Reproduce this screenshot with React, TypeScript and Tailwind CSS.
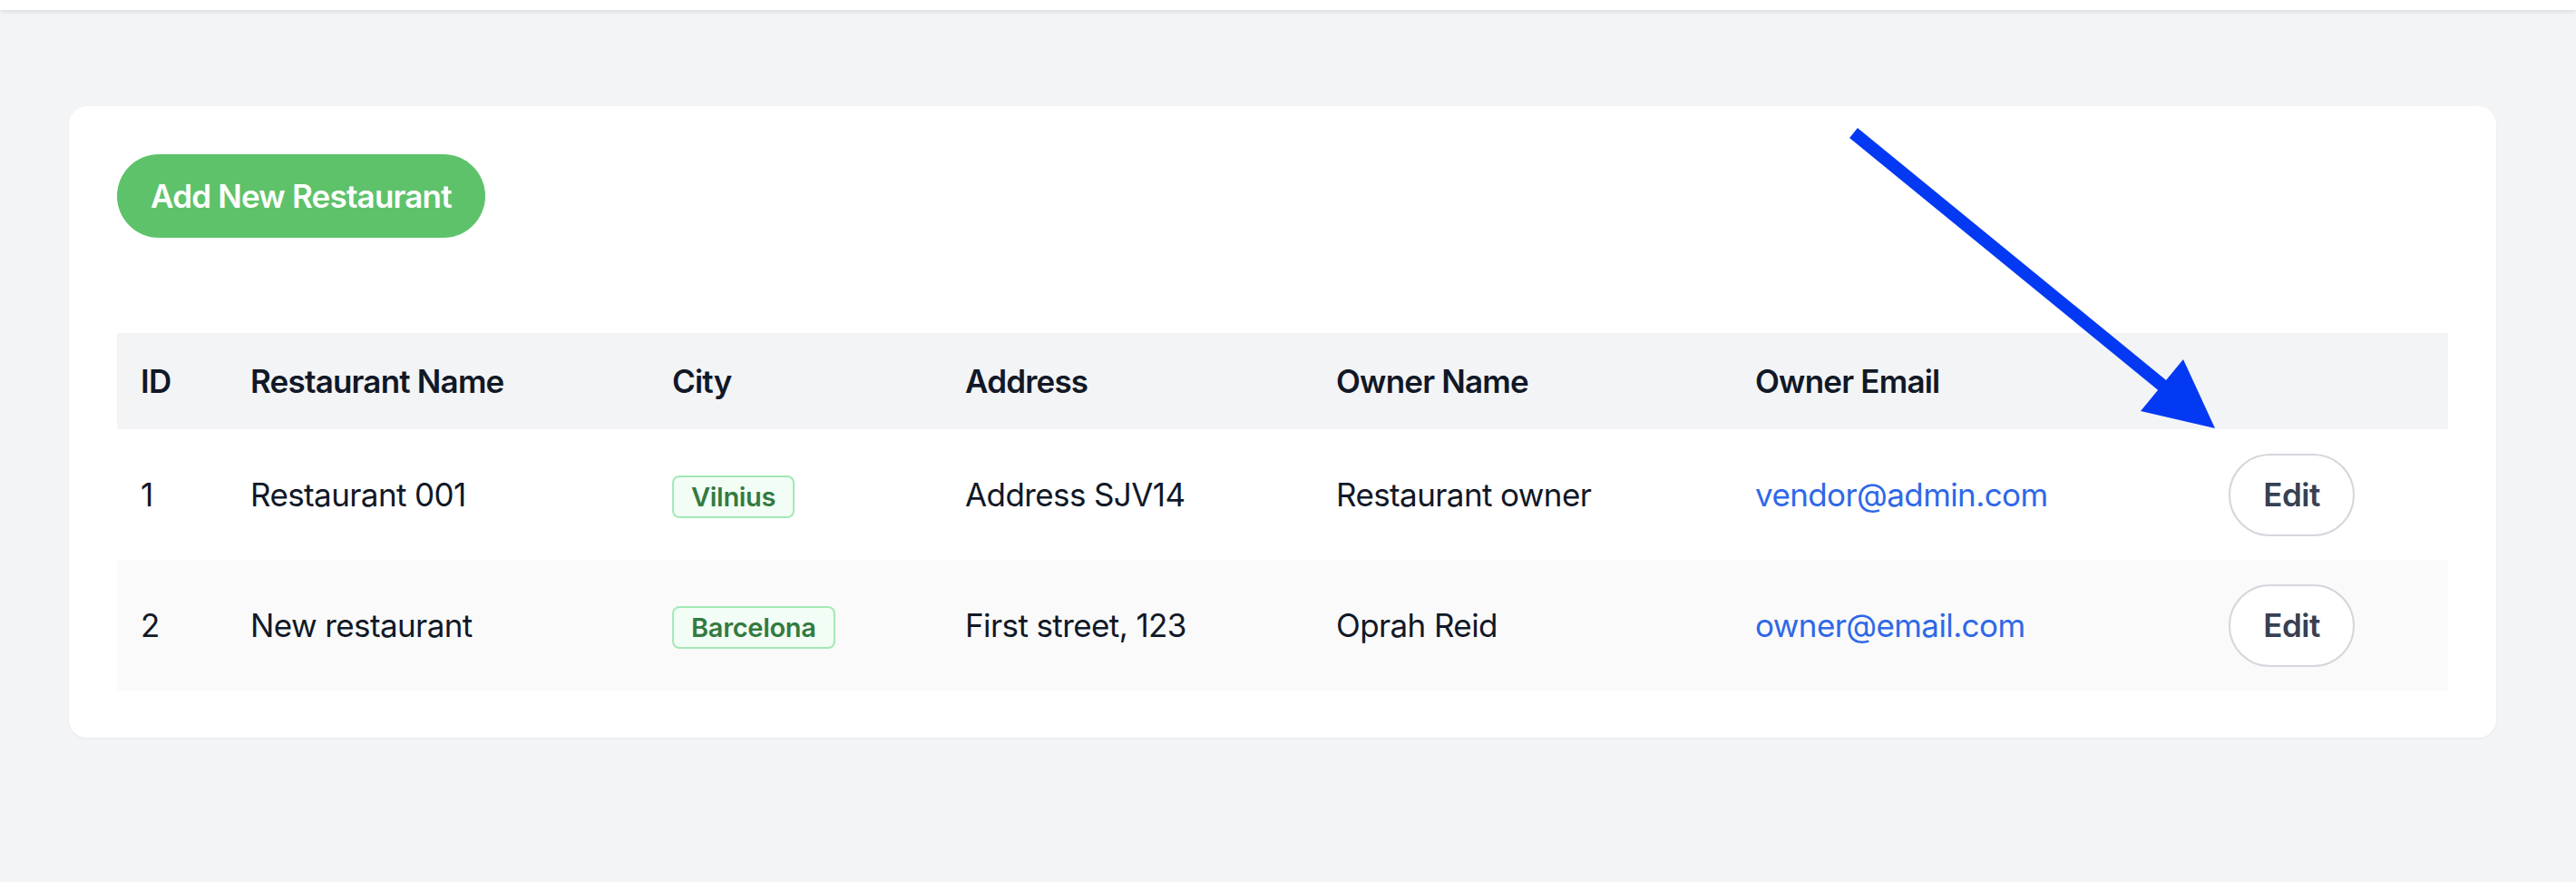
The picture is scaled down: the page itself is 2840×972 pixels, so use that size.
import React from 'react';

interface Restaurant {
  id: number;
  name: string;
  city: string;
  address: string;
  owner: string;
  email: string;
}

const restaurants: Restaurant[] = [
  { id: 1, name: 'Restaurant 001', city: 'Vilnius', address: 'Address SJV14', owner: 'Restaurant owner', email: 'vendor@admin.com' },
  { id: 2, name: 'New restaurant', city: 'Barcelona', address: 'First street, 123', owner: 'Oprah Reid', email: 'owner@email.com' },
];

const headers = ['ID', 'Restaurant Name', 'City', 'Address', 'Owner Name', 'Owner Email', ''];

const gridCols = 'grid grid-cols-[121px_465px_323px_409px_462px_522px_267px] items-center';

const PointerArrow: React.FC = () => (
  <svg className="pointer-events-none absolute left-[2020px] top-[120px]" width="450" height="380" viewBox="0 0 450 380">
    <line x1="23.5" y1="26.5" x2="368" y2="308" stroke="#0439f4" strokeWidth="14" />
    <polygon points="387,276 340,333 422,352" fill="#0439f4" />
  </svg>
);

export default function App() {
  return (
    <div className="relative min-h-screen bg-[#f3f4f6] font-['Inter',sans-serif] text-[#111827]">
      <div className="h-[11px] bg-white shadow-[0_2px_5px_rgba(0,0,0,0.1)]" />

      <main className="pt-[106px] pl-[76px]">
        <section className="w-[2676px] rounded-[20px] bg-white px-[53px] pt-[53px] pb-[52px] shadow-[0_1px_3px_rgba(0,0,0,0.05)]">
          <button className="h-[92px] rounded-full bg-[#5ec26a] px-[37px] text-[35px] font-semibold tracking-[-0.8px] text-white">
            Add New Restaurant
          </button>

          <div className="mt-[105px]">
            <div className={`${gridCols} h-[106px] bg-[#f3f4f6] text-[35px] font-semibold tracking-[-0.8px]`}>
              {headers.map((h, i) => (
                <div key={i} className="px-[26px]">
                  {h}
                </div>
              ))}
            </div>

            {restaurants.map((r, idx) => (
              <div
                key={r.id}
                className={`${gridCols} h-[144px] text-[35px] tracking-[-0.6px] ${idx % 2 === 1 ? 'bg-[#fafafa]' : 'bg-white'}`}
              >
                <div className="px-[26px]">{r.id}</div>
                <div className="px-[26px]">{r.name}</div>
                <div className="px-[26px]">
                  <span className="inline-flex h-[47px] items-center rounded-[8px] border-2 border-[#a3e9b6] bg-[#f2fdf5] px-[19px] text-[29px] font-semibold tracking-[-0.3px] text-[#337a40]">
                    {r.city}
                  </span>
                </div>
                <div className="px-[26px]">{r.address}</div>
                <div className="px-[26px]">{r.owner}</div>
                <div className="px-[26px] text-[#2f68e8]">{r.email}</div>
                <div className="px-[26px]">
                  <button className="h-[91px] w-[139px] rounded-full border-2 border-[#d4d7dc] bg-white text-[35px] font-semibold tracking-[-0.5px] text-[#374151]">
                    Edit
                  </button>
                </div>
              </div>
            ))}
          </div>
        </section>
      </main>

      <PointerArrow />
    </div>
  );
}
